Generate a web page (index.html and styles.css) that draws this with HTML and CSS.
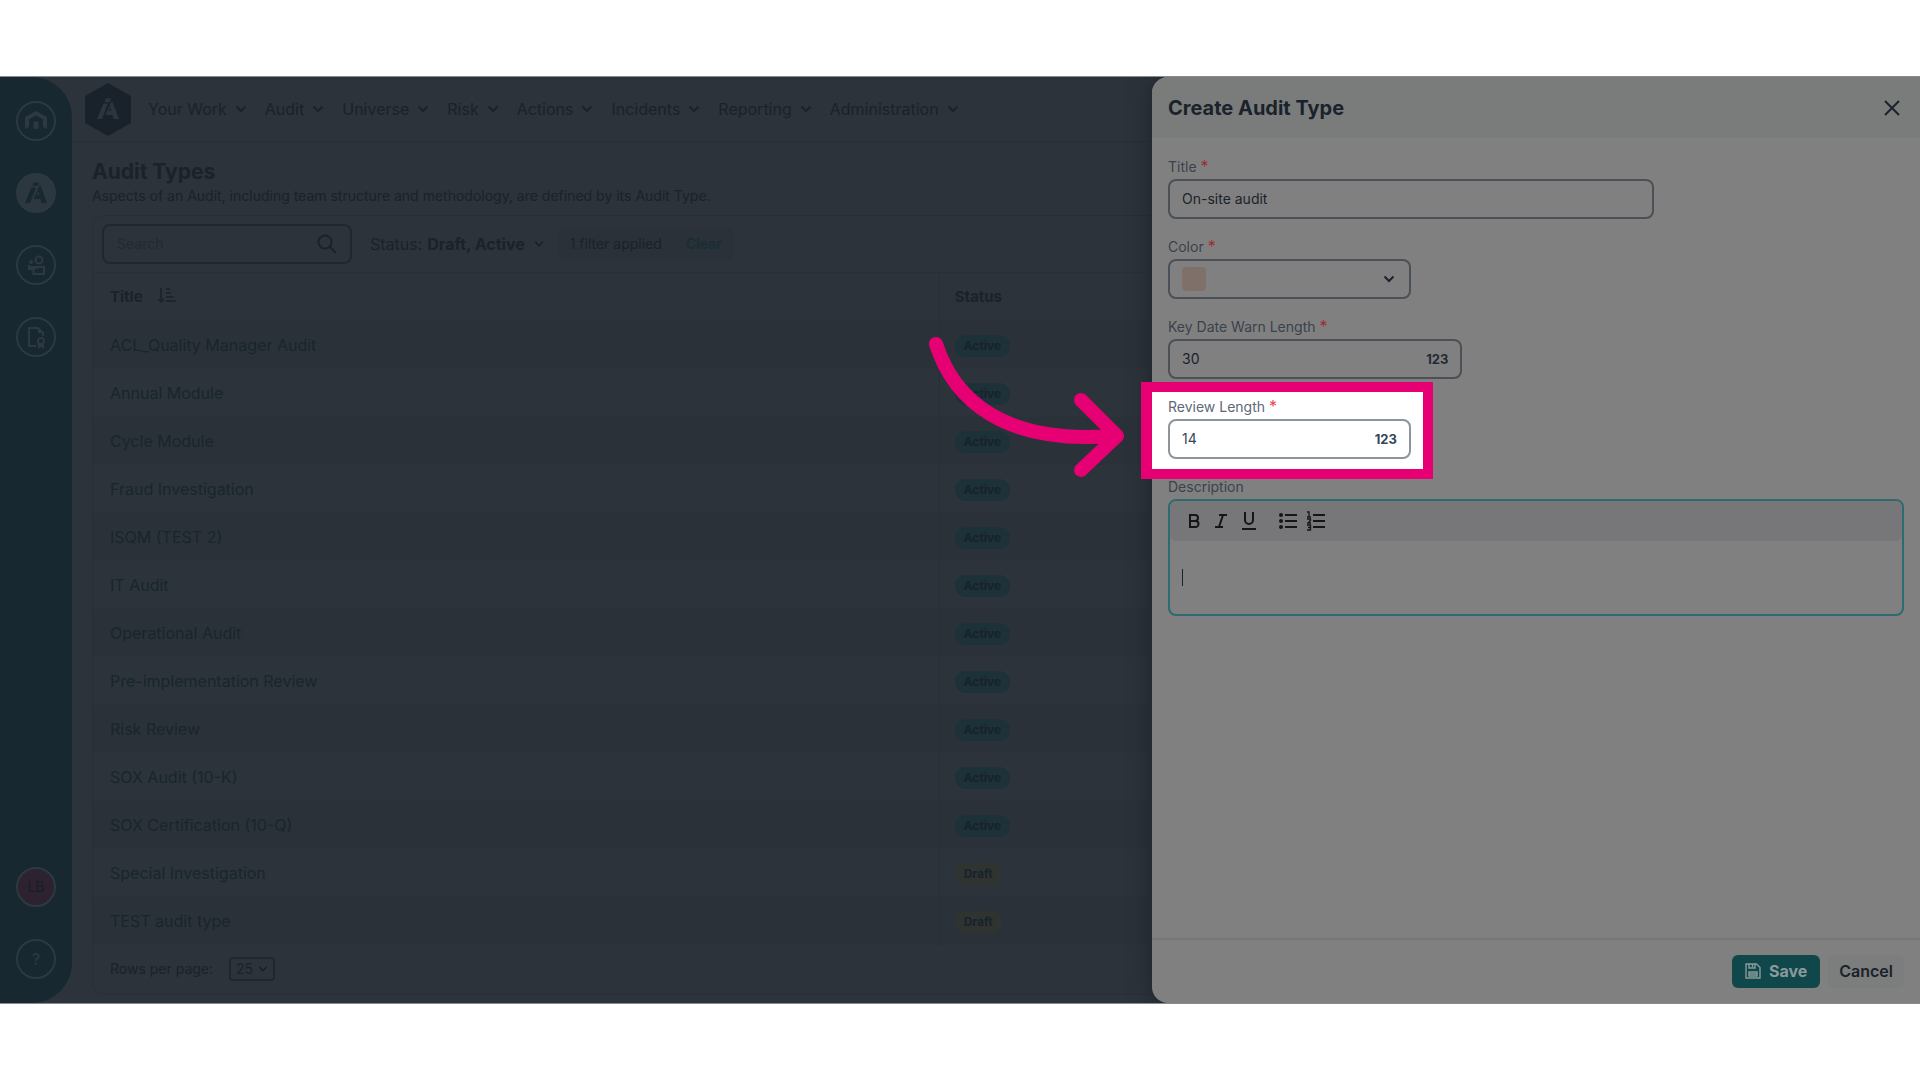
FILE: index.html
```html
<!DOCTYPE html>
<html lang="en">
<head>
<meta charset="utf-8">
<meta name="viewport" content="width=device-width, initial-scale=1">
<title>Audit Types</title>
<link rel="stylesheet" href="styles.css">
</head>
<body>
<svg class="defs" aria-hidden="true">
  <symbol id="chevron" viewBox="0 0 12 8"><path d="M1.5 1.5 6 6l4.500-4.500" fill="none" stroke="currentColor" stroke-width="2"/></symbol>
  <symbol id="ia" viewBox="0 0 22 22"><path fill="currentColor" fill-rule="evenodd" d="M9 .5h5L12.500 4h-5zM6.500 5.500h4.500L5 21H0zM15 2.500 22 21h-5.500l-1-4H8.500l2-4.500zM13.500 9l-1.500 4h2.500z"/></symbol>
</svg>
<div class="app">
  <aside class="rail">
    <a class="rail-item" href="#" aria-label="Home"><svg width="24" height="24" viewBox="0 0 24 24"><path fill="currentColor" d="M1 20V8L12 2l11 6v12l-4-2v-7.500l-7-4-7 4V18zM9.500 12.500h5V19l-1.500 1h-2l-1.500-1z"/></svg></a>
    <a class="rail-item rail-item-active" href="#" aria-label="Audit"><svg width="22" height="22"><use href="#ia"/></svg></a>
    <a class="rail-item" href="#" aria-label="Teams"><svg width="20" height="22" viewBox="0 0 20 22"><g fill="none" stroke="currentColor" stroke-width="2"><circle cx="13" cy="6" r="3.500"/><path d="M7.500 13H18v7H7.500zM3 11v4h4"/></g><circle cx="5" cy="8" r="2" fill="currentColor"/><path fill="currentColor" d="M2 12h10v3H2z"/></svg></a>
    <a class="rail-item" href="#" aria-label="Certifications"><svg width="20" height="24" viewBox="0 0 20 24"><g fill="none" stroke="currentColor" stroke-width="2"><path d="M10 21H3V3h9l5 5v3"/><circle cx="15" cy="16" r="3"/></g><path fill="currentColor" d="M12 2v6h6zM12 18v6l3-2 3 2v-6z"/></svg></a>
    <span class="rail-item rail-user">LB</span>
    <a class="rail-item" href="#" aria-label="Help">?</a>
  </aside>

  <div class="main">
    <header class="topbar">
      <svg class="logo" width="46" height="53" viewBox="0 0 46 53"><path d="M23 0 46 13v27L23 53 0 40V13z" fill="#19212a"/><svg x="12" y="15" width="22" height="22" viewBox="0 0 22 22" color="#2c353d"><use href="#ia"/></svg></svg>
      <nav class="nav">
        <a href="#">Your Work <svg class="chev"><use href="#chevron"/></svg></a>
        <a href="#">Audit <svg class="chev"><use href="#chevron"/></svg></a>
        <a href="#">Universe <svg class="chev"><use href="#chevron"/></svg></a>
        <a href="#">Risk <svg class="chev"><use href="#chevron"/></svg></a>
        <a href="#">Actions <svg class="chev"><use href="#chevron"/></svg></a>
        <a href="#">Incidents <svg class="chev"><use href="#chevron"/></svg></a>
        <a href="#">Reporting <svg class="chev"><use href="#chevron"/></svg></a>
        <a href="#">Administration <svg class="chev"><use href="#chevron"/></svg></a>
      </nav>
    </header>

    <main class="content">
      <h1>Audit Types</h1>
      <p class="lead">Aspects of an Audit, including team structure and methodology, are defined by its Audit Type.</p>
      <section class="panel">
        <div class="toolbar">
          <div class="search">
            <input type="search" placeholder="Search" aria-label="Search">
            <svg width="20" height="20" viewBox="0 0 20 20"><g fill="none" stroke="currentColor" stroke-width="2"><circle cx="8" cy="8" r="6.500"/><path d="m13 13 6 6"/></g></svg>
          </div>
          <button class="filter" type="button">Status: <b>Draft, Active</b><svg class="chev"><use href="#chevron"/></svg></button>
          <div class="applied"><span>1 filter applied</span><button type="button">Clear</button></div>
        </div>
        <table>
          <thead><tr><th class="col-title">Title <svg class="sort" width="18" height="16" viewBox="0 0 18 16"><path d="M3 0v14M0 11l3 3 3-3M8 1h4M8 5h5M8 9h8M8 13h10" fill="none" stroke="currentColor" stroke-width="1.500"/></svg></th><th>Status</th></tr></thead>
          <tbody>
            <tr><td><a href="#">ACL_Quality Manager Audit</a></td><td><span class="badge">Active</span></td></tr>
            <tr><td><a href="#">Annual Module</a></td><td><span class="badge">Active</span></td></tr>
            <tr><td><a href="#">Cycle Module</a></td><td><span class="badge">Active</span></td></tr>
            <tr><td><a href="#">Fraud Investigation</a></td><td><span class="badge">Active</span></td></tr>
            <tr><td><a href="#">ISQM (TEST 2)</a></td><td><span class="badge">Active</span></td></tr>
            <tr><td><a href="#">IT Audit</a></td><td><span class="badge">Active</span></td></tr>
            <tr><td><a href="#">Operational Audit</a></td><td><span class="badge">Active</span></td></tr>
            <tr><td><a href="#">Pre-implementation Review</a></td><td><span class="badge">Active</span></td></tr>
            <tr><td><a href="#">Risk Review</a></td><td><span class="badge">Active</span></td></tr>
            <tr><td><a href="#">SOX Audit (10-K)</a></td><td><span class="badge">Active</span></td></tr>
            <tr><td><a href="#">SOX Certification (10-Q)</a></td><td><span class="badge">Active</span></td></tr>
            <tr><td><a href="#">Special Investigation</a></td><td><span class="badge badge-draft">Draft</span></td></tr>
            <tr><td><a href="#">TEST audit type</a></td><td><span class="badge badge-draft">Draft</span></td></tr>
          </tbody>
        </table>
        <div class="pager">
          <label for="rows">Rows per page:</label>
          <div class="rows"><select id="rows"><option>25</option></select><svg class="chev"><use href="#chevron"/></svg></div>
        </div>
      </section>
    </main>
  </div>

  <form class="drawer">
    <header class="drawer-head">
      <h2>Create Audit Type</h2>
      <button type="button" class="close" aria-label="Close"><svg width="16" height="16" viewBox="0 0 16 16"><path d="m1 1 14 14M15 1 1 15" stroke="currentColor" stroke-width="2"/></svg></button>
    </header>
    <div class="drawer-body">
      <div class="field field-wide">
        <label for="title">Title <i>*</i></label>
        <div class="box"><input id="title" type="text" value="On-site audit"></div>
      </div>
      <div class="field field-short">
        <label for="color">Color <i>*</i></label>
        <div class="box"><span class="swatch"></span><select id="color" class="color"><option></option></select><svg class="chev"><use href="#chevron"/></svg></div>
      </div>
      <div class="field field-mid">
        <label for="warn">Key Date Warn Length <i>*</i></label>
        <div class="box"><input id="warn" type="text" inputmode="numeric" value="30"><b>123</b></div>
      </div>
      <div class="field field-short spotlight">
        <label for="review">Review Length <i>*</i></label>
        <div class="box"><input id="review" type="text" inputmode="numeric" value="14"><b>123</b></div>
      </div>
      <div class="field">
        <label for="desc">Description</label>
        <div class="editor">
          <div class="tools">
            <button type="button" aria-label="Bold"><svg width="12" height="16" viewBox="0 0 12 16"><path d="M2 2h5a3 3 0 0 1 0 6H2zM2 8h5.500a3 3 0 0 1 0 6H2z" fill="none" stroke="currentColor" stroke-width="2"/></svg></button>
            <button type="button" aria-label="Italic"><svg width="14" height="16" viewBox="0 0 14 16"><path d="M5 2h8M1 14h8M9 2 5 14" fill="none" stroke="currentColor" stroke-width="2"/></svg></button>
            <button type="button" aria-label="Underline"><svg width="14" height="20" viewBox="0 0 14 20"><path d="M3 1v8a4 4 0 0 0 8 0V1M0 18h14" fill="none" stroke="currentColor" stroke-width="2"/></svg></button>
            <button type="button" class="lists" aria-label="Bulleted list"><svg width="18" height="18" viewBox="0 0 18 18"><path d="M6 3h12M6 9h12M6 15h12" stroke="currentColor" stroke-width="2"/><g fill="currentColor"><circle cx="2" cy="3" r="2"/><circle cx="2" cy="9" r="2"/><circle cx="2" cy="15" r="2"/></g></svg></button>
            <button type="button" aria-label="Numbered list"><svg width="18" height="20" viewBox="0 0 18 20"><path d="M6 4h12M6 10h12M6 16h12" stroke="currentColor" stroke-width="2"/><path d="M0 1h2v5M0 6h4M0 8h3.500v1.500L1 12h3M0 14h3.500v5H0M1 16.500h2.500" fill="none" stroke="currentColor" stroke-width="1.300"/></svg></button>
          </div>
          <div class="editor-area"><span class="caret"></span><textarea id="desc" rows="1"></textarea></div>
        </div>
      </div>
    </div>
    <footer class="drawer-foot">
      <button type="submit" class="btn btn-save"><svg width="16" height="16" viewBox="0 0 16 16"><path d="M1 1h10.500L15 4.500V15H1zM4 1v4h6V1M7.500 1v3M4 9h8v4H4zM4 11h8" fill="none" stroke="currentColor" stroke-width="1.400"/></svg>Save</button>
      <button type="button" class="btn">Cancel</button>
    </footer>
    <svg class="arrow" width="210" height="150" viewBox="0 0 210 150" aria-hidden="true"><path d="M16 14C34 70 84 114 190 106M161 70l36 36-36 34" fill="none" stroke="#e60073" stroke-width="14" stroke-linecap="round" stroke-linejoin="round"/></svg>
  </form>
</div>
</body>
</html>
```
FILE: styles.css
```css
* { box-sizing: border-box; }

body {
  margin: 0;
  padding: 76px 0;
  background: #fff;
  color: #1a222b;
  font: 16px/24px Inter, "Open Sans", sans-serif;
}

.defs { position: absolute; width: 0; height: 0; }
svg { flex: none; }
a { color: inherit; text-decoration: none; }
button, input, select, textarea {
  margin: 0;
  padding: 0;
  border: 0;
  background: none;
  color: inherit;
  font: inherit;
  outline: 0;
  appearance: none;
}
.chev { width: 12px; height: 8px; }

.app {
  position: relative;
  display: flex;
  overflow: hidden;
  border: solid #868c8f;
  border-width: 1px 0;
  background: #2c333a;
}

/* Icon rail */
.rail {
  display: flex;
  flex-direction: column;
  gap: 32px;
  flex: none;
  width: 72px;
  padding: 24px 16px;
  border-radius: 0 40px 40px 0;
  background: #182830;
  color: #2c3941;
}
.rail-item {
  display: flex;
  align-items: center;
  justify-content: center;
  width: 40px;
  height: 40px;
  border: 2px solid #2c3941;
  border-radius: 50%;
  font-weight: 500;
}
.rail-item-active { background: #2c3740; color: #182830; }
.rail-user { margin-top: auto; background: #2d2230; color: #1a1d28; font-size: 14px; }

/* Page */
.main { flex: 1; min-width: 0; }
.topbar {
  display: flex;
  align-items: center;
  gap: 17px;
  height: 65px;
  padding-left: 13px;
  border-bottom: 1px solid #272e35;
}
.nav { display: flex; gap: 18px; white-space: nowrap; }
.nav a { display: flex; align-items: center; gap: 8px; }

.content { padding: 18px 16px 8px 20px; }
h1 { margin: 0; font-size: 21px; line-height: 24px; }
.lead { margin: 0 0 7px; font-size: 14px; }
.panel { border: 1px solid #272e35; border-radius: 12px; }

.toolbar { display: flex; align-items: center; height: 56px; padding: 0 9px; }
.search {
  display: flex;
  align-items: center;
  width: 250px;
  height: 40px;
  padding: 0 13px;
  border: 2px solid #20272f;
  border-radius: 8px;
}
.search input { flex: 1; min-width: 0; font-size: 14px; }
.search input::placeholder { color: #232a32; opacity: 1; }
.filter { display: flex; align-items: center; gap: 5px; margin: 0 14px 0 18px; }
.filter .chev { width: 10px; margin-left: 4px; }
.applied {
  display: flex;
  align-items: center;
  gap: 24px;
  height: 30px;
  padding: 0 12px;
  border-radius: 8px;
  background: #2a3138;
  font-size: 14px;
}
.applied button { color: #182d34; font-weight: 600; }

table { width: 100%; border-collapse: collapse; table-layout: fixed; }
th, td { height: 48px; padding: 0 15px; text-align: left; }
th { border-top: 1px solid #293037; font-size: 15px; }
th:first-child, td:first-child { padding-left: 17px; border-right: 1px solid #272e35; }
.col-title { width: 46.75%; }
.sort { margin-left: 12px; vertical-align: -2px; }
td { color: #17262e; }
tbody tr:nth-child(odd) { background: #2b3138; }
.badge {
  display: inline-block;
  padding: 0 9px;
  border-radius: 11px;
  background: #1d3139;
  color: #17222b;
  font-size: 12px;
  font-weight: 700;
  line-height: 22px;
  vertical-align: middle;
}
.badge-draft { background: #2f3430; }

.pager { display: flex; align-items: center; gap: 16px; height: 49px; padding-left: 17px; font-size: 14px; }
.rows {
  display: flex;
  align-items: center;
  gap: 4px;
  height: 24px;
  padding: 0 5px;
  border: 2px solid #20272f;
  border-radius: 4px;
}
.rows select { width: 18px; }
.rows .chev { width: 10px; }

/* Drawer */
.drawer {
  position: absolute;
  inset: 0 0 0 auto;
  display: flex;
  flex-direction: column;
  width: 40%;
  border-radius: 16px 0 0 16px;
  background: #808080;
  box-shadow: 0 0 24px #1f232b;
}
.drawer-head {
  display: flex;
  align-items: center;
  justify-content: space-between;
  height: 61px;
  padding: 0 20px 0 16px;
  border-radius: 16px 0 0;
  background: #7a7c7b;
}
h2 { margin: 0; font-size: 20px; }
.close { display: flex; }

.drawer-body { flex: 1; display: flex; flex-direction: column; gap: 18px; padding: 19px 16px; }
.field { position: relative; display: flex; flex-direction: column; gap: 2px; font-size: 14px; }
.field-wide { width: 66%; }
.field-mid { width: 40%; }
.field-short { width: 33%; }
.field label { color: #3a424b; line-height: 20px; }
.field i { color: #a12b35; font-size: 16px; font-style: normal; line-height: 16px; }
.box {
  display: flex;
  align-items: center;
  height: 40px;
  padding: 0 12px;
  border: 2px solid #4a5056;
  border-radius: 8px;
}
.box input, .box select { flex: 1; min-width: 0; }
.box b { color: #202b36; font-size: 13px; }
.swatch { width: 24px; height: 24px; border-radius: 4px; background: #80706a; }
.field-short .chev { margin-right: 2px; }

.spotlight::before {
  content: "";
  position: absolute;
  inset: -15px -22px -20px -27px;
  border: 10px solid #e60073;
  border-left-width: 11px;
  background: #fff;
}
.spotlight label, .spotlight .box { position: relative; }
.spotlight label { color: #5d6977; }
.spotlight i { color: #ec4450; }
.spotlight .box { border-color: #8c949c; color: #35465a; }
.spotlight .box b { color: #35465a; }

.editor { border: 2px solid #2f6a70; border-radius: 8px; }
.tools {
  display: flex;
  align-items: center;
  height: 40px;
  padding-left: 18px;
  border-radius: 6px;
  background: #777779;
  color: #151519;
}
.tools button { display: flex; margin-right: 14px; }
.tools .lists { margin: 0 10px 0 9px; }
.editor-area { position: relative; display: flex; height: 73px; padding: 24px 12px; }
.editor-area textarea { flex: 1; resize: none; }
.caret { position: absolute; left: 12px; top: 28px; width: 1px; height: 17px; background: #1a222b; }

.drawer-foot {
  display: flex;
  justify-content: flex-end;
  gap: 8px;
  padding: 15px 16px;
  border-top: 2px solid #777;
}
.btn {
  display: flex;
  align-items: center;
  gap: 8px;
  height: 33px;
  padding: 0 11px;
  border-radius: 6px;
  background: #7c7d7d;
  font-weight: 600;
}
.btn-save { padding: 0 13px; background: #0f474b; color: #8a9a9c; font-weight: 700; }

.arrow { position: absolute; left: -232px; top: 253px; }
```
